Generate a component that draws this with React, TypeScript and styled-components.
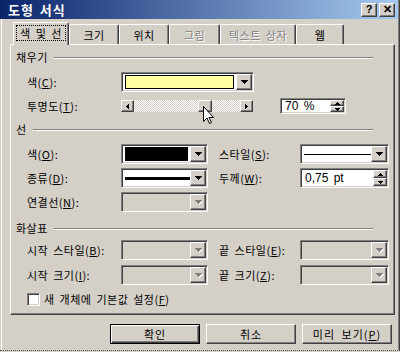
import React from "react";
import styled, { createGlobalStyle, css } from "styled-components";

const FACE = "#d4d0c8";
const SHADOW = "#808080";
const DARK = "#404040";

const GlobalStyle = createGlobalStyle`
  html, body { margin: 0; padding: 0; background: ${FACE}; }
  body {
    font-family: "Noto Sans CJK KR", "Noto Sans", sans-serif;
    font-size: 11px;
    letter-spacing: 0.5px;
    word-spacing: 2px;
    color: #000;
  }
  * { box-sizing: border-box; }
`;

const raised = css`
  border: 1px solid;
  border-color: #fff ${DARK} ${DARK} #fff;
  box-shadow: inset -1px -1px ${SHADOW}, inset 1px 1px ${FACE};
  background: ${FACE};
`;

const sunken = css`
  border: 1px solid;
  border-color: ${SHADOW} #fff #fff ${SHADOW};
  box-shadow: inset 1px 1px ${DARK}, inset -1px -1px ${FACE};
`;

const Window = styled.div`
  position: relative;
  width: 400px;
  height: 351px;
  display: flex;
  flex-direction: column;
  background: ${FACE};
  border-bottom: 1px dotted #555;
  box-shadow: inset 1px 0 ${FACE}, inset 2px 0 #fff, inset -1px 0 ${DARK}, inset -2px 0 ${SHADOW};
`;

const TitleBar = styled.div`
  height: 19px;
  margin-right: 2px;
  display: flex;
  align-items: center;
  padding: 0 3px 0 8px;
  background: linear-gradient(to right, #0a246a, #a6caf0);
  color: #fff;
`;

const TitleText = styled.div`
  flex: 1;
  font-size: 13px;
  font-weight: bold;
  letter-spacing: 1px;
  line-height: 19px;
`;

const CapButton = styled.div`
  ${raised};
  width: 16px;
  height: 14px;
  margin-left: 2px;
  display: flex;
  align-items: center;
  justify-content: center;
  color: #000;
  font-family: "Liberation Sans", sans-serif;
  font-weight: bold;
  font-size: 11px;
  letter-spacing: 0;
  line-height: 1;
`;

const Body = styled.div`
  flex: 1;
  display: flex;
  flex-direction: column;
  padding: 3px 5px 0 10px;
`;

const TabRow = styled.div`
  display: flex;
  align-items: flex-end;
  height: 22px;
  padding-left: 3px;
`;

const Tab = styled.div<{ $w: number; $sel?: boolean; $off?: boolean }>`
  position: relative;
  width: ${(p) => p.$w}px;
  height: ${(p) => (p.$sel ? 23 : 20)}px;
  margin-bottom: ${(p) => (p.$sel ? -1 : 0)}px;
  z-index: ${(p) => (p.$sel ? 2 : 1)};
  background: ${FACE};
  border-top: 1px solid #fff;
  border-left: 1px solid #fff;
  border-right: 1px solid ${DARK};
  border-top-left-radius: 2px;
  border-top-right-radius: 2px;
  box-shadow: inset -1px 0 ${SHADOW};
  display: flex;
  align-items: ${(p) => (p.$sel ? "flex-start" : "center")};
  padding-top: ${(p) => (p.$sel ? 3 : 0)}px;
  justify-content: center;
  white-space: nowrap;
  color: ${(p) => (p.$off ? SHADOW : "#000")};
  text-shadow: ${(p) => (p.$off ? "1px 1px #fff" : "none")};
`;

const FocusRect = styled.span`
  outline: 1px dotted #000;
  padding: 0 3px;
  line-height: 14px;
`;

const Panel = styled.div`
  height: 271px;
  ${raised};
  padding: 5px 0 0 5px;
  display: flex;
  flex-direction: column;
`;

const GroupHead = styled.div<{ $top: number }>`
  display: flex;
  align-items: center;
  height: 14px;
  margin-top: ${(p) => p.$top}px;
`;

const HeadLine = styled.div`
  flex: 1;
  margin: 1px 21px 0 6px;
  border-top: 1px solid ${SHADOW};
  border-bottom: 1px solid #fff;
`;

const Row = styled.div<{ $top: number; $h?: number }>`
  display: flex;
  align-items: center;
  height: ${(p) => p.$h ?? 20}px;
  margin-top: ${(p) => p.$top}px;
  padding-left: 11px;
`;

const Label = styled.div<{ $w: number }>`
  width: ${(p) => p.$w}px;
  flex: none;
  white-space: nowrap;
`;

const U = styled.span`
  text-decoration: underline;
`;

const Combo = styled.div<{ $w: number; $off?: boolean }>`
  ${sunken};
  width: ${(p) => p.$w}px;
  height: 20px;
  flex: none;
  display: flex;
  padding: 2px;
  background: ${(p) => (p.$off ? FACE : "#fff")};
`;

const Field = styled.div<{ $off?: boolean }>`
  flex: 1;
  display: flex;
  align-items: center;
  padding: 1px 2px;
  background: ${(p) => (p.$off ? FACE : "#fff")};
  margin: -1px 0 -1px -1px;
`;

const Swatch = styled.div<{ $color: string; $outline?: boolean }>`
  flex: 1;
  height: 100%;
  background: ${(p) => p.$color};
  border: ${(p) => (p.$outline ? "1px solid #000" : "none")};
`;

const LineSample = styled.div<{ $t: number }>`
  flex: 1;
  height: ${(p) => p.$t}px;
  background: #000;
  margin-right: -2px;
`;

const DropBtn = styled.div`
  ${raised};
  width: 16px;
  flex: none;
  margin: -1px -1px -1px 0;
  display: flex;
  align-items: center;
  justify-content: center;
`;

const Arrow = ({ dir, off, w = 7 }: { dir: "down" | "up" | "left" | "right"; off?: boolean; w?: number }) => {
  const h = Math.ceil(w / 2);
  const vert = dir === "down" || dir === "up";
  const pts =
    dir === "down"
      ? `0,0 ${w},0 ${w / 2},${h}`
      : dir === "up"
      ? `0,${h} ${w},${h} ${w / 2},0`
      : dir === "left"
      ? `${h},0 ${h},${w} 0,${w / 2}`
      : `0,0 0,${w} ${h},${w / 2}`;
  return (
    <svg
      width={vert ? w : h}
      height={vert ? h : w}
      style={{ display: "block", filter: off ? "drop-shadow(1px 1px 0 #fff)" : undefined }}
    >
      <polygon points={pts} fill={off ? SHADOW : "#000"} shapeRendering="crispEdges" />
    </svg>
  );
};

const Slider = styled.div`
  width: 132px;
  height: 12px;
  flex: none;
  display: flex;
`;

const SliderBtn = styled.div`
  ${raised};
  width: 13px;
  height: 12px;
  flex: none;
  display: flex;
  align-items: center;
  justify-content: center;
`;

const Track = styled.div`
  flex: 1;
  display: flex;
  background-color: #fff;
  background-image: conic-gradient(#fff 25%, ${FACE} 0 50%, #fff 0 75%, ${FACE} 0);
  background-size: 2px 2px;
`;

const Thumb = styled.div`
  ${raised};
  width: 14px;
  height: 12px;
`;

const Spin = styled.div<{ $w: number; $h: number; $ml?: number }>`
  ${sunken};
  width: ${(p) => p.$w}px;
  height: ${(p) => p.$h}px;
  margin-left: ${(p) => p.$ml ?? 0}px;
  flex: none;
  display: flex;
  background: #fff;
  padding: 2px;
`;

const SpinText = styled.div`
  flex: 1;
  display: flex;
  align-items: center;
  padding-left: 2px;
  font-family: "Liberation Sans", "Noto Sans CJK KR", sans-serif;
  font-size: 12px;
  letter-spacing: 0;
`;

const SpinBtns = styled.div`
  width: 14px;
  display: flex;
  flex-direction: column;
  margin: -1px -1px -1px 0;
`;

const SpinBtn = styled.div`
  ${raised};
  flex: 1;
  display: flex;
  align-items: center;
  justify-content: center;
`;

const Gap = styled.div<{ $w: number }>`
  width: ${(p) => p.$w}px;
  flex: none;
`;

const CheckBox = styled.div`
  ${sunken};
  width: 13px;
  height: 13px;
  background: #fff;
  margin-right: 4px;
`;

const ButtonRow = styled.div`
  display: flex;
  justify-content: flex-end;
  gap: 6px;
  margin-top: 9px;
  padding-right: 3px;
`;

const PushButton = styled.div<{ $def?: boolean }>`
  width: 90px;
  height: 20px;
  display: flex;
  align-items: center;
  justify-content: center;
  background: ${FACE};
  border: 1px solid;
  border-color: #fff ${DARK} ${DARK} #fff;
  box-shadow: inset -1px -1px ${SHADOW};
  ${(p) =>
    p.$def &&
    css`
      border: 1px solid #000;
      box-shadow: inset 1px 1px #fff, inset -1px -1px ${DARK}, inset -2px -2px ${SHADOW};
    `}
  letter-spacing: 1px;
  word-spacing: 3px;
`;

const Cursor = styled.svg`
  position: absolute;
  left: 203px;
  top: 106px;
`;

const FillCombo = ({ children, w, off }: { children?: React.ReactNode; w: number; off?: boolean }) => (
  <Combo $w={w} $off={off}>
    <Field $off={off}>{children}</Field>
    <DropBtn>
      <Arrow dir="down" off={off} />
    </DropBtn>
  </Combo>
);

const SpinBox = ({ text, w, h, ml }: { text: string; w: number; h: number; ml?: number }) => (
  <Spin $w={w} $h={h} $ml={ml}>
    <SpinText>{text}</SpinText>
    <SpinBtns>
      <SpinBtn>
        <Arrow dir="up" w={5} />
      </SpinBtn>
      <SpinBtn>
        <Arrow dir="down" w={5} />
      </SpinBtn>
    </SpinBtns>
  </Spin>
);

const tabs = [
  { label: "색 및 선", w: 56, sel: true },
  { label: "크기", w: 50 },
  { label: "위치", w: 50 },
  { label: "그림", w: 51, off: true },
  { label: "텍스트 상자", w: 76, off: true },
  { label: "웹", w: 48 },
];

const transparency = 70;

export default function App() {
  // thumb offset inside the 106px track
  const thumbLeft = Math.round(((106 - 14) * transparency) / 100);

  return (
    <Window>
      <GlobalStyle />
      <TitleBar>
        <TitleText>도형 서식</TitleText>
        <CapButton>?</CapButton>
        <CapButton>✕</CapButton>
      </TitleBar>

      <Body>
        <TabRow>
          {tabs.map((t) => (
            <Tab key={t.label} $w={t.w} $sel={t.sel} $off={t.off}>
              {t.sel ? <FocusRect>{t.label}</FocusRect> : t.label}
            </Tab>
          ))}
        </TabRow>

        <Panel>
          <GroupHead $top={0}>
            채우기
            <HeadLine />
          </GroupHead>
          <Row $top={8}>
            <Label $w={94}>
              색(<U>C</U>):
            </Label>
            <FillCombo w={133}>
              <Swatch $color="#ffffa0" $outline />
            </FillCombo>
          </Row>
          <Row $top={4}>
            <Label $w={94}>
              투명도(<U>T</U>):
            </Label>
            <Slider>
              <SliderBtn>
                <Arrow dir="left" w={5} />
              </SliderBtn>
              <Track>
                <Thumb style={{ marginLeft: thumbLeft }} />
              </Track>
              <SliderBtn>
                <Arrow dir="right" w={5} />
              </SliderBtn>
            </Slider>
            <SpinBox text="70 %" w={66} h={16} ml={27} />
          </Row>

          <GroupHead $top={6}>
            선
            <HeadLine />
          </GroupHead>
          <Row $top={8}>
            <Label $w={94}>
              색(<U>O</U>):
            </Label>
            <FillCombo w={87}>
              <Swatch $color="#000" />
            </FillCombo>
            <Gap $w={11} />
            <Label $w={81}>
              스타일(<U>S</U>):
            </Label>
            <FillCombo w={89}>
              <LineSample $t={1} />
            </FillCombo>
          </Row>
          <Row $top={4}>
            <Label $w={94}>
              종류(<U>D</U>):
            </Label>
            <FillCombo w={87}>
              <LineSample $t={3} />
            </FillCombo>
            <Gap $w={11} />
            <Label $w={81}>
              두께(<U>W</U>):
            </Label>
            <SpinBox text="0,75 pt" w={89} h={20} />
          </Row>
          <Row $top={4}>
            <Label $w={94}>
              연결선(<U>N</U>):
            </Label>
            <FillCombo w={87} off />
          </Row>

          <GroupHead $top={9}>
            화살표
            <HeadLine />
          </GroupHead>
          <Row $top={5}>
            <Label $w={94}>
              시작 스타일(<U>B</U>):
            </Label>
            <FillCombo w={87} off />
            <Gap $w={11} />
            <Label $w={81}>
              끝 스타일(<U>E</U>):
            </Label>
            <FillCombo w={89} off />
          </Row>
          <Row $top={5}>
            <Label $w={94}>
              시작 크기(<U>I</U>):
            </Label>
            <FillCombo w={87} off />
            <Gap $w={11} />
            <Label $w={81}>
              끝 크기(<U>Z</U>):
            </Label>
            <FillCombo w={89} off />
          </Row>
          <Row $top={7} $h={14}>
            <CheckBox />
            새 개체에 기본값 설정(<U>F</U>)
          </Row>
        </Panel>

        <ButtonRow>
          <PushButton $def>확인</PushButton>
          <PushButton>취소</PushButton>
          <PushButton>
            미리 보기(<U>P</U>)
          </PushButton>
        </ButtonRow>
      </Body>

      <Cursor width="12" height="19" viewBox="0 0 12 19">
        <path d="M0.5 0.5 L0.5 15.5 L4 12 L6.5 17.5 L8.5 16.5 L6 11.5 L10.5 11.5 Z" fill="#fff" stroke="#000" strokeWidth="1" />
      </Cursor>
    </Window>
  );
}
